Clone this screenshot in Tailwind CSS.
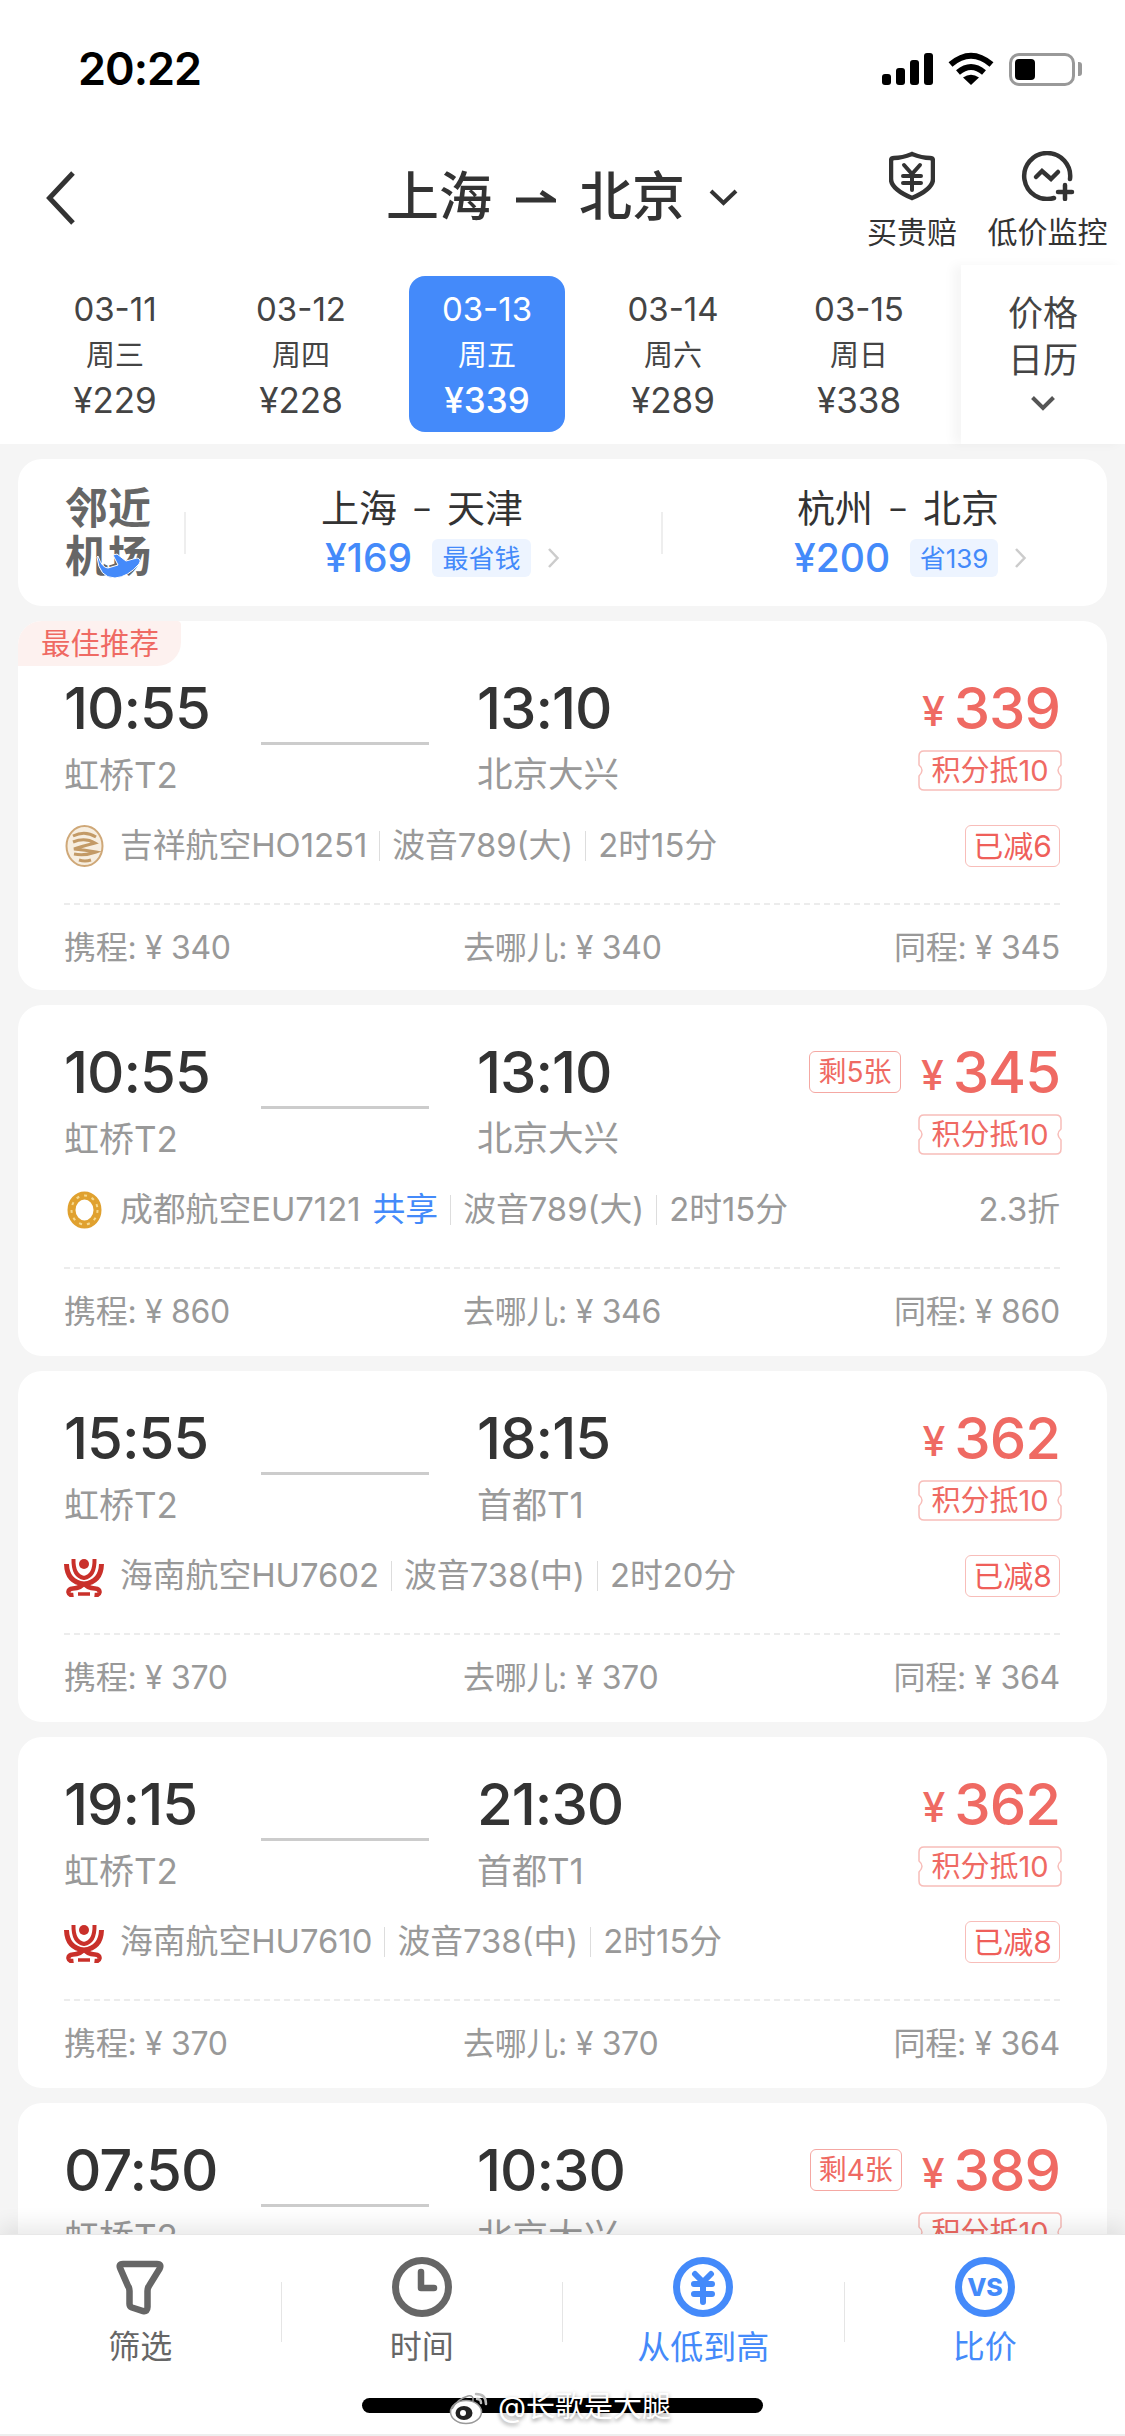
<!DOCTYPE html>
<html lang="zh-CN">
<head>
<meta charset="utf-8">
<title>上海 - 北京</title>
<script src="https://cdn.jsdelivr.net/npm/@tailwindcss/browser@4"></script>
</head>
<body class="m-0">
<div class="relative w-[1125px] h-[2436px] overflow-hidden bg-[#f5f5f5] text-[#333] font-['Inter','Noto_Sans_CJK_SC',sans-serif]">

  <!-- top white area -->
  <div class="bg-white h-[444px]">
    <!-- status bar -->
    <div class="flex h-[106px] pt-[53px]">
      <div class="ml-[78px] h-[32px] flex items-center text-[45px] font-semibold text-black tracking-[-1px]">20:22</div>
      <div class="ml-auto mr-[43px] flex items-start">
        <div class="flex items-end gap-[5px] h-[32px]">
          <div class="w-[9px] h-[11px] rounded-[3px] bg-black"></div>
          <div class="w-[9px] h-[17px] rounded-[3px] bg-black"></div>
          <div class="w-[9px] h-[25px] rounded-[3px] bg-black"></div>
          <div class="w-[9px] h-[32px] rounded-[3px] bg-black"></div>
        </div>
        <svg class="ml-[15px] -mt-[1px]" width="46" height="33" viewBox="0 0 46 33" fill="none"><path d="M2.5 12.5Q23 -5 43.500 12.500" stroke="#000" stroke-width="6"/><path d="M10 20.500Q23 9.500 36 20.500" stroke="#000" stroke-width="6"/><path d="M15 25.500Q23 20 31 25.500L23 33Z" fill="#000"/></svg>
        <div class="ml-[15px] w-[66px] h-[33px] rounded-[10px] border-[3px] border-[#999] p-[3px] pr-0">
          <div class="w-[20px] h-[21px] rounded-[4px] bg-black"></div>
        </div>
        <div class="ml-[3px] mt-[9px] w-[4px] h-[14px] rounded-r-[3px] bg-[#999]"></div>
      </div>
    </div>

    <!-- header -->
    <div class="flex h-[159px]">
      <svg class="ml-[46px] mt-[64px]" width="30" height="56" viewBox="0 0 30 56" fill="none"><path d="M27 3L3.500 28L27 53" stroke="#333" stroke-width="5"/></svg>
      <div class="ml-[310px] mt-[62px] h-[58px] flex items-center text-[#333]">
        <span class="text-[53px] leading-none font-medium">上海</span>
        <svg class="ml-[24px]" width="40" height="20" viewBox="0 0 40 20" fill="none"><path d="M0 13H37L25 5" stroke="#333" stroke-width="5"/></svg>
        <span class="ml-[23px] text-[53px] leading-none font-medium">北京</span>
        <svg class="ml-[23px]" width="31" height="18" viewBox="0 0 31 18" fill="none"><path d="M3 3L15.500 15L28 3" stroke="#333" stroke-width="4"/></svg>
      </div>
      <div class="ml-auto mr-[18px] mt-[45px] flex gap-[32px]">
        <div class="w-[88px] flex flex-col items-center">
          <svg width="46" height="50" viewBox="0 0 46 50" fill="none"><path d="M23 3Q33 7 41 7Q44 7 44 10V28Q44 38 23 47Q2 38 2 28V10Q2 7 5 7Q13 7 23 3Z" stroke="#333" stroke-width="4.500"/><path d="M15 14L23 23L31 14M14 25H32M14 32H32M23 23V39" stroke="#333" stroke-width="4" stroke-linecap="round"/></svg>
          <div class="mt-[15px] text-[30px] leading-[32px] whitespace-nowrap">买贵赔</div>
        </div>
        <div class="w-[119px] flex flex-col items-center">
          <svg width="54" height="50" viewBox="0 0 54 50" fill="none"><path d="M49 28A23 23 0 1 0 33 47" stroke="#333" stroke-width="4.500" stroke-linecap="round"/><path d="M15 26L21 20L30 28L37 21" stroke="#333" stroke-width="4.500" stroke-linecap="round"/><path d="M37 41H51M44 34V48" stroke="#333" stroke-width="4.500" stroke-linecap="round"/></svg>
          <div class="mt-[15px] text-[30px] leading-[32px] whitespace-nowrap">低价监控</div>
        </div>
      </div>
    </div>

    <!-- date tabs -->
    <div class="flex h-[179px]">
      <div class="pl-[22px] pt-[11px] flex">
        <div class="w-[186px] flex justify-center"><div class="w-[156px] h-[156px] pt-[11px] text-center text-[#444] leading-[45.500px]"><div class="text-[33px]">03-11</div><div class="text-[29px]">周三</div><div class="text-[35px]">¥229</div></div></div>
        <div class="w-[186px] flex justify-center"><div class="w-[156px] h-[156px] pt-[11px] text-center text-[#444] leading-[45.500px]"><div class="text-[33px]">03-12</div><div class="text-[29px]">周四</div><div class="text-[35px]">¥228</div></div></div>
        <div class="w-[186px] flex justify-center"><div class="w-[156px] h-[156px] pt-[11px] rounded-[16px] bg-[#448afa] text-center text-white leading-[45.500px]"><div class="text-[33px]">03-13</div><div class="text-[29px]">周五</div><div class="text-[35px] font-medium">¥339</div></div></div>
        <div class="w-[186px] flex justify-center"><div class="w-[156px] h-[156px] pt-[11px] text-center text-[#444] leading-[45.500px]"><div class="text-[33px]">03-14</div><div class="text-[29px]">周六</div><div class="text-[35px]">¥289</div></div></div>
        <div class="w-[186px] flex justify-center"><div class="w-[156px] h-[156px] pt-[11px] text-center text-[#444] leading-[45.500px]"><div class="text-[33px]">03-15</div><div class="text-[29px]">周日</div><div class="text-[35px]">¥338</div></div></div>
      </div>
      <div class="ml-auto w-[164px] flex flex-col items-center bg-white shadow-[-8px_0_10px_rgba(0,0,0,0.04)] pt-[25px] text-[#444]">
        <div class="text-[35px] leading-[47px]">价格</div>
        <div class="text-[35px] leading-[47px]">日历</div>
        <svg class="mt-[11px]" width="26" height="16" viewBox="0 0 26 16" fill="none"><path d="M2.500 2.500L13 13L23.500 2.500" stroke="#555" stroke-width="4"/></svg>
      </div>
    </div>
  </div>

  <!-- list -->
  <div class="px-[18px] pt-[15px] flex flex-col gap-[15px]">

    <!-- nearby airports -->
    <div class="relative h-[147px] rounded-[24px] bg-white flex">
      <div class="relative w-[166px] pl-[47px] pt-[25px] text-[43px] leading-[48px] font-bold text-[#666] whitespace-nowrap">
        <div>邻近</div><div>机场</div>
        <svg class="absolute left-[78px] top-[94px]" width="46" height="28" viewBox="0 0 46 28"><path d="M1 4Q3 25 19 25Q32 24 43 11Q46 6 41 5L30 8L21 1L17 2L22 12L12 15Q6 15 2 3Z" fill="#448afa" stroke="#fff" stroke-width="1"/></svg>
      </div>
      <div class="mt-[53px] w-[2px] h-[42px] bg-[#eee]"></div>
      <div class="w-[475px] pl-[135px] pt-[28px]">
        <div class="flex items-center text-[38px] leading-[42px] whitespace-nowrap"><span>上海</span><span class="w-[50px] text-center text-[30px]">–</span><span>天津</span></div>
        <div class="mt-[10px] h-[38px] flex items-center">
          <span class="ml-[4px] text-[39px] font-medium text-[#448afa]">¥169</span>
          <span class="ml-[20px] h-[38px] w-[99px] rounded-[6px] bg-[#edf4ff] text-[#448afa] text-[26px] flex items-center justify-center">最省钱</span>
          <svg class="ml-[16px]" width="13" height="22" viewBox="0 0 13 22" fill="none"><path d="M2 2L10.500 11L2 20" stroke="#ccc" stroke-width="2.500"/></svg>
        </div>
      </div>
      <div class="mt-[53px] w-[2px] h-[42px] bg-[#eee]"></div>
      <div class="pl-[134px] pt-[28px]">
        <div class="flex items-center text-[38px] leading-[42px] whitespace-nowrap"><span>杭州</span><span class="w-[50px] text-center text-[30px]">–</span><span>北京</span></div>
        <div class="mt-[10px] h-[38px] flex items-center">
          <span class="-ml-[3px] text-[39px] font-medium text-[#448afa]">¥200</span>
          <span class="ml-[20px] h-[38px] w-[88px] rounded-[6px] bg-[#edf4ff] text-[#448afa] text-[26px] flex items-center justify-center">省139</span>
          <svg class="ml-[16px]" width="13" height="22" viewBox="0 0 13 22" fill="none"><path d="M2 2L10.500 11L2 20" stroke="#ccc" stroke-width="2.500"/></svg>
        </div>
      </div>
    </div>

    <!-- card 1 -->
    <div class="relative h-[369px] rounded-[24px] bg-white pl-[46px] pr-[47px] pt-[57px]">
      <div class="absolute left-0 top-0 w-[163px] h-[45px] rounded-tl-[24px] rounded-br-[24px] rounded-tr-[4px] bg-[#fdf1ef] text-[#ef6a63] text-[29.500px] flex items-center pl-[23px]">最佳推荐</div>
      <div class="flex">
        <div class="w-[197px]"><div class="h-[60px] flex items-center text-[58px] font-medium tracking-[-1px]">10:55</div><div class="mt-[15px] h-[44px] flex items-center text-[35px] text-[#999]">虹桥T2</div></div>
        <div class="w-[168px] pt-[64px]"><div class="h-[3px] bg-[#ccc]"></div></div>
        <div class="ml-[48px]"><div class="h-[60px] flex items-center text-[58px] font-medium tracking-[-1px]">13:10</div><div class="mt-[15px] h-[44px] flex items-center text-[35.500px] text-[#999]">北京大兴</div></div>
        <div class="ml-auto flex flex-col items-end">
          <div class="h-[60px] flex items-center text-[#ef6a63]"><span class="text-[41px] font-medium mr-[9px] mt-[8px]">¥</span><span class="text-[58px] font-medium tracking-[-1px]">339</span></div>
          <div class="relative mt-[12px] w-[144px] h-[41px] flex items-center justify-center text-[#ef6a63] text-[29px] -mr-[2px]">
            <svg class="absolute inset-0" width="144" height="41" viewBox="0 0 144 41" fill="none"><path d="M6 1H138Q143 1 143 6V15Q137 20 143 26V35Q143 40 138 40H6Q1 40 1 35V26Q7 20 1 15V6Q1 1 6 1Z" stroke="#f8bdb9" stroke-width="1.500"/></svg>
            <span class="relative">积分抵10</span>
          </div>
        </div>
      </div>
      <div class="mt-[27px] h-[44px] flex items-center text-[32.800px] text-[#999] whitespace-nowrap">
        <svg class="shrink-0 ml-[1px]" width="39" height="42" viewBox="0 0 39 42"><ellipse cx="19.500" cy="21" rx="18" ry="20" fill="#f7eee0" stroke="#cfa878" stroke-width="2"/><path d="M8 11Q20 5 31 12M8 17Q20 12 30 18Q18 21 9 24Q20 25 31 27Q20 31 9 29M14 35Q20 37 26 35" fill="none" stroke="#c39a66" stroke-width="3"/></svg>
        <span class="ml-[16px]">吉祥航空HO1251</span><span class="mx-[12px] w-px h-[30px] bg-[#ddd]"></span><span>波音789(大)</span><span class="mx-[12px] w-px h-[30px] bg-[#ddd]"></span><span>2时15分</span>
        <span class="ml-auto h-[42px] w-[95px] rounded-[6px] border-[1.500px] border-[#f8bdb9] text-[#ef5f5a] text-[30px] flex items-center justify-center">已减6</span>
      </div>
      <div class="mt-[35px] border-t-2 border-dashed border-[#ececec]"></div>
      <div class="mt-[21px] h-[44px] flex items-center justify-between text-[32px] text-[#999] tracking-[-0.300px] whitespace-nowrap"><span>携程: ¥ 340</span><span>去哪儿: ¥ 340</span><span>同程: ¥ 345</span></div>
    </div>

    <!-- card 2 -->
    <div class="relative h-[351px] rounded-[24px] bg-white pl-[46px] pr-[47px] pt-[37px]">
      <div class="flex">
        <div class="w-[197px]"><div class="h-[60px] flex items-center text-[58px] font-medium tracking-[-1px]">10:55</div><div class="mt-[15px] h-[44px] flex items-center text-[35px] text-[#999]">虹桥T2</div></div>
        <div class="w-[168px] pt-[64px]"><div class="h-[3px] bg-[#ccc]"></div></div>
        <div class="ml-[48px]"><div class="h-[60px] flex items-center text-[58px] font-medium tracking-[-1px]">13:10</div><div class="mt-[15px] h-[44px] flex items-center text-[35.500px] text-[#999]">北京大兴</div></div>
        <div class="ml-auto flex flex-col items-end">
          <div class="h-[60px] flex items-center text-[#ef6a63]"><span class="h-[42px] w-[92px] mr-[20px] rounded-[6px] border-[1.500px] border-[#f5a8a3] text-[28px] flex items-center justify-center">剩5张</span><span class="text-[41px] font-medium mr-[9px] mt-[8px]">¥</span><span class="text-[58px] font-medium tracking-[-1px]">345</span></div>
          <div class="relative mt-[12px] w-[144px] h-[41px] flex items-center justify-center text-[#ef6a63] text-[29px] -mr-[2px]">
            <svg class="absolute inset-0" width="144" height="41" viewBox="0 0 144 41" fill="none"><path d="M6 1H138Q143 1 143 6V15Q137 20 143 26V35Q143 40 138 40H6Q1 40 1 35V26Q7 20 1 15V6Q1 1 6 1Z" stroke="#f8bdb9" stroke-width="1.500"/></svg>
            <span class="relative">积分抵10</span>
          </div>
        </div>
      </div>
      <div class="mt-[27px] h-[44px] flex items-center text-[32.800px] text-[#999] whitespace-nowrap">
        <svg class="shrink-0 ml-[1px]" width="39" height="42" viewBox="0 0 39 42" fill="none"><ellipse cx="19.500" cy="21" rx="13" ry="14.500" stroke="#e0a12f" stroke-width="8"/><ellipse cx="19.500" cy="21" rx="13" ry="14.500" stroke="#f6d98f" stroke-width="2" stroke-dasharray="3 5"/></svg>
        <span class="ml-[16px]">成都航空EU7121</span><span class="ml-[12px] text-[#448afa]">共享</span><span class="mx-[12px] w-px h-[30px] bg-[#ddd]"></span><span>波音789(大)</span><span class="mx-[12px] w-px h-[30px] bg-[#ddd]"></span><span>2时15分</span>
        <span class="ml-auto">2.3折</span>
      </div>
      <div class="mt-[35px] border-t-2 border-dashed border-[#ececec]"></div>
      <div class="mt-[21px] h-[44px] flex items-center justify-between text-[32px] text-[#999] tracking-[-0.300px] whitespace-nowrap"><span>携程: ¥ 860</span><span>去哪儿: ¥ 346</span><span>同程: ¥ 860</span></div>
    </div>

    <!-- card 3 -->
    <div class="relative h-[351px] rounded-[24px] bg-white pl-[46px] pr-[47px] pt-[37px]">
      <div class="flex">
        <div class="w-[197px]"><div class="h-[60px] flex items-center text-[58px] font-medium tracking-[-1px]">15:55</div><div class="mt-[15px] h-[44px] flex items-center text-[35px] text-[#999]">虹桥T2</div></div>
        <div class="w-[168px] pt-[64px]"><div class="h-[3px] bg-[#ccc]"></div></div>
        <div class="ml-[48px]"><div class="h-[60px] flex items-center text-[58px] font-medium tracking-[-1px]">18:15</div><div class="mt-[15px] h-[44px] flex items-center text-[35px] text-[#999]">首都T1</div></div>
        <div class="ml-auto flex flex-col items-end">
          <div class="h-[60px] flex items-center text-[#ef6a63]"><span class="text-[41px] font-medium mr-[9px] mt-[8px]">¥</span><span class="text-[58px] font-medium tracking-[-1px]">362</span></div>
          <div class="relative mt-[12px] w-[144px] h-[41px] flex items-center justify-center text-[#ef6a63] text-[29px] -mr-[2px]">
            <svg class="absolute inset-0" width="144" height="41" viewBox="0 0 144 41" fill="none"><path d="M6 1H138Q143 1 143 6V15Q137 20 143 26V35Q143 40 138 40H6Q1 40 1 35V26Q7 20 1 15V6Q1 1 6 1Z" stroke="#f8bdb9" stroke-width="1.500"/></svg>
            <span class="relative">积分抵10</span>
          </div>
        </div>
      </div>
      <div class="mt-[27px] h-[44px] flex items-center text-[32.800px] text-[#999] whitespace-nowrap">
        <svg class="shrink-0" width="40" height="42" viewBox="0 0 40 42" fill="none"><circle cx="20" cy="9" r="5" fill="#c9302a"/><path d="M2.500 9Q3 27 20 29Q37 27 37.500 9" stroke="#c9302a" stroke-width="5"/><path d="M9.500 4Q9 21 20 23Q31 21 30.500 4" stroke="#c9302a" stroke-width="4"/><path d="M20 28Q17 33 9 33.500Q4 34 4.500 37.500Q5 40.500 9.500 40M20 28Q23 33 31 33.500Q36 34 35.500 37.500Q35 40.500 30.500 40" stroke="#c9302a" stroke-width="4.500"/><path d="M14 39H26" stroke="#c9302a" stroke-width="3.500"/></svg>
        <span class="ml-[16px]">海南航空HU7602</span><span class="mx-[12px] w-px h-[30px] bg-[#ddd]"></span><span>波音738(中)</span><span class="mx-[12px] w-px h-[30px] bg-[#ddd]"></span><span>2时20分</span>
        <span class="ml-auto h-[42px] w-[95px] rounded-[6px] border-[1.500px] border-[#f8bdb9] text-[#ef5f5a] text-[30px] flex items-center justify-center">已减8</span>
      </div>
      <div class="mt-[35px] border-t-2 border-dashed border-[#ececec]"></div>
      <div class="mt-[21px] h-[44px] flex items-center justify-between text-[32px] text-[#999] tracking-[-0.300px] whitespace-nowrap"><span>携程: ¥ 370</span><span>去哪儿: ¥ 370</span><span>同程: ¥ 364</span></div>
    </div>

    <!-- card 4 -->
    <div class="relative h-[351px] rounded-[24px] bg-white pl-[46px] pr-[47px] pt-[37px]">
      <div class="flex">
        <div class="w-[197px]"><div class="h-[60px] flex items-center text-[58px] font-medium tracking-[-1px]">19:15</div><div class="mt-[15px] h-[44px] flex items-center text-[35px] text-[#999]">虹桥T2</div></div>
        <div class="w-[168px] pt-[64px]"><div class="h-[3px] bg-[#ccc]"></div></div>
        <div class="ml-[48px]"><div class="h-[60px] flex items-center text-[58px] font-medium tracking-[-1px]">21:30</div><div class="mt-[15px] h-[44px] flex items-center text-[35px] text-[#999]">首都T1</div></div>
        <div class="ml-auto flex flex-col items-end">
          <div class="h-[60px] flex items-center text-[#ef6a63]"><span class="text-[41px] font-medium mr-[9px] mt-[8px]">¥</span><span class="text-[58px] font-medium tracking-[-1px]">362</span></div>
          <div class="relative mt-[12px] w-[144px] h-[41px] flex items-center justify-center text-[#ef6a63] text-[29px] -mr-[2px]">
            <svg class="absolute inset-0" width="144" height="41" viewBox="0 0 144 41" fill="none"><path d="M6 1H138Q143 1 143 6V15Q137 20 143 26V35Q143 40 138 40H6Q1 40 1 35V26Q7 20 1 15V6Q1 1 6 1Z" stroke="#f8bdb9" stroke-width="1.500"/></svg>
            <span class="relative">积分抵10</span>
          </div>
        </div>
      </div>
      <div class="mt-[27px] h-[44px] flex items-center text-[32.800px] text-[#999] whitespace-nowrap">
        <svg class="shrink-0" width="40" height="42" viewBox="0 0 40 42" fill="none"><circle cx="20" cy="9" r="5" fill="#c9302a"/><path d="M2.500 9Q3 27 20 29Q37 27 37.500 9" stroke="#c9302a" stroke-width="5"/><path d="M9.500 4Q9 21 20 23Q31 21 30.500 4" stroke="#c9302a" stroke-width="4"/><path d="M20 28Q17 33 9 33.500Q4 34 4.500 37.500Q5 40.500 9.500 40M20 28Q23 33 31 33.500Q36 34 35.500 37.500Q35 40.500 30.500 40" stroke="#c9302a" stroke-width="4.500"/><path d="M14 39H26" stroke="#c9302a" stroke-width="3.500"/></svg>
        <span class="ml-[16px]">海南航空HU7610</span><span class="mx-[12px] w-px h-[30px] bg-[#ddd]"></span><span>波音738(中)</span><span class="mx-[12px] w-px h-[30px] bg-[#ddd]"></span><span>2时15分</span>
        <span class="ml-auto h-[42px] w-[95px] rounded-[6px] border-[1.500px] border-[#f8bdb9] text-[#ef5f5a] text-[30px] flex items-center justify-center">已减8</span>
      </div>
      <div class="mt-[35px] border-t-2 border-dashed border-[#ececec]"></div>
      <div class="mt-[21px] h-[44px] flex items-center justify-between text-[32px] text-[#999] tracking-[-0.300px] whitespace-nowrap"><span>携程: ¥ 370</span><span>去哪儿: ¥ 370</span><span>同程: ¥ 364</span></div>
    </div>

    <!-- card 5 -->
    <div class="relative h-[351px] rounded-[24px] bg-white pl-[46px] pr-[47px] pt-[37px]">
      <div class="flex">
        <div class="w-[197px]"><div class="h-[60px] flex items-center text-[58px] font-medium tracking-[-1px]">07:50</div><div class="mt-[15px] h-[44px] flex items-center text-[35px] text-[#999]">虹桥T2</div></div>
        <div class="w-[168px] pt-[64px]"><div class="h-[3px] bg-[#ccc]"></div></div>
        <div class="ml-[48px]"><div class="h-[60px] flex items-center text-[58px] font-medium tracking-[-1px]">10:30</div><div class="mt-[15px] h-[44px] flex items-center text-[35.500px] text-[#999]">北京大兴</div></div>
        <div class="ml-auto flex flex-col items-end">
          <div class="h-[60px] flex items-center text-[#ef6a63]"><span class="h-[42px] w-[92px] mr-[20px] rounded-[6px] border-[1.500px] border-[#f5a8a3] text-[28px] flex items-center justify-center">剩4张</span><span class="text-[41px] font-medium mr-[9px] mt-[8px]">¥</span><span class="text-[58px] font-medium tracking-[-1px]">389</span></div>
          <div class="relative mt-[12px] w-[144px] h-[41px] flex items-center justify-center text-[#ef6a63] text-[29px] -mr-[2px]">
            <svg class="absolute inset-0" width="144" height="41" viewBox="0 0 144 41" fill="none"><path d="M6 1H138Q143 1 143 6V15Q137 20 143 26V35Q143 40 138 40H6Q1 40 1 35V26Q7 20 1 15V6Q1 1 6 1Z" stroke="#f8bdb9" stroke-width="1.500"/></svg>
            <span class="relative">积分抵10</span>
          </div>
        </div>
      </div>
    </div>
  </div>

  <!-- bottom bar -->
  <div class="absolute left-0 right-0 bottom-0 h-[202px] bg-white border-t border-[#e8e8e8] border-b-2 border-b-[#eee] shadow-[0_-8px_20px_rgba(0,0,0,0.09)]">
    <div class="flex pt-[22px]">
      <div class="w-[281px] flex flex-col items-center">
        <svg width="60" height="60" viewBox="0 0 60 60" fill="none"><path d="M13 7H47Q52 7 49.500 12L39 29Q37.500 31 37.500 34V50Q37.500 55 33 54L22 50.500Q19.500 49.500 19.500 47V34Q19.500 31 18 29L10.500 12Q8 7 13 7Z" stroke="#666" stroke-width="6.500"/></svg>
        <div class="mt-[13px] text-[32px] leading-[34px] text-[#666]">筛选</div>
      </div>
      <div class="mt-[25px] w-px h-[60px] bg-[#e5e5e5]"></div>
      <div class="w-[281px] flex flex-col items-center">
        <svg width="60" height="60" viewBox="0 0 60 60" fill="none"><circle cx="30" cy="30" r="26.500" stroke="#666" stroke-width="7"/><path d="M29 15V31H42" stroke="#666" stroke-width="6.500" stroke-linecap="round" stroke-linejoin="round"/></svg>
        <div class="mt-[13px] text-[32px] leading-[34px] text-[#666]">时间</div>
      </div>
      <div class="mt-[25px] w-px h-[60px] bg-[#e5e5e5]"></div>
      <div class="w-[281px] flex flex-col items-center">
        <svg width="60" height="60" viewBox="0 0 60 60" fill="none"><circle cx="30" cy="30" r="26.500" stroke="#448afa" stroke-width="7"/><path d="M22 17L30 25L38 17M21 27H39M21 37H39M30 25V45" stroke="#448afa" stroke-width="6" stroke-linecap="round"/></svg>
        <div class="mt-[13px] text-[33px] leading-[34px] text-[#448afa] whitespace-nowrap">从低到高</div>
      </div>
      <div class="mt-[25px] w-px h-[60px] bg-[#e5e5e5]"></div>
      <div class="w-[281px] flex flex-col items-center">
        <svg width="60" height="60" viewBox="0 0 60 60" fill="none"><circle cx="30" cy="30" r="26.500" stroke="#448afa" stroke-width="7"/><text x="30" y="39" text-anchor="middle" font-family="Inter,sans-serif" font-size="25" font-weight="800" fill="#448afa">VS</text></svg>
        <div class="mt-[13px] text-[32px] leading-[34px] text-[#448afa]">比价</div>
      </div>
    </div>
    <!-- home indicator -->
    <div class="absolute left-[362px] top-[163px] w-[401px] h-[15px] rounded-full bg-black"></div>
    <!-- watermark -->
    <div class="absolute left-[449px] top-[154px] flex items-center">
      <svg width="42" height="36" viewBox="0 0 42 36" fill="none"><path d="M27 5Q37 5 37 15M28 10Q32 10 32 14" stroke="#bbb" stroke-width="2.500" stroke-linecap="round"/><ellipse cx="17" cy="23" rx="15.500" ry="11.500" fill="#fff" stroke="#999" stroke-width="1.500"/><path d="M3 20Q8 10 19 7Q25 6 24 12" stroke="#999" stroke-width="1.500"/><ellipse cx="15" cy="24" rx="8.500" ry="7" fill="#222"/><circle cx="14" cy="24" r="3" fill="#fff"/></svg>
      <span class="ml-[7px] text-[29px] leading-[36px] text-white whitespace-nowrap [text-shadow:0_2px_4px_rgba(0,0,0,0.45)]">@长歌是大腿</span>
    </div>
  </div>
</div>
</body>
</html>
